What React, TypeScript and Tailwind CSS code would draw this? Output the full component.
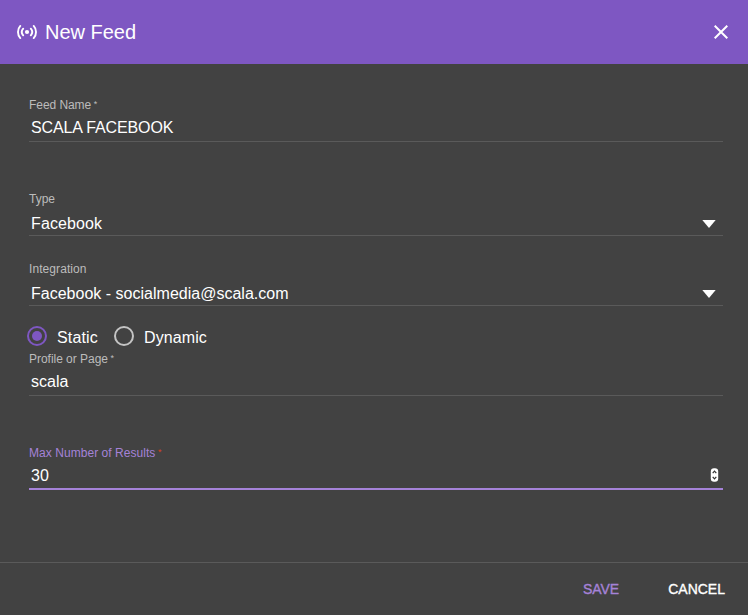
import React from 'react';

type FieldProps = {
  label: string;
  value: string;
  required?: boolean;
  select?: boolean;
  focused?: boolean;
  labelClass?: string;
  valueClass?: string;
  className?: string;
};

function Field({ label, value, required, select, focused, labelClass = '', valueClass = '', className = '' }: FieldProps) {
  return (
    <div className={`${className} ${focused ? 'border-b-2 border-[#a582d8]' : 'border-b border-[#5a5a5a]'}`}>
      <div className={`flex h-4 items-center text-[12px] leading-4 ${focused ? 'text-[#a582d8]' : 'text-[#bcbcbc]'}`}>
        <span className={labelClass}>{label}</span>
        {required && (
          <span className={`ml-[2.5px] h-4 text-[9px] leading-[15px] ${focused ? 'text-[#d8401e]' : ''}`}>*</span>
        )}
      </div>
      <div className={`flex justify-between pl-0.5 text-[16px] text-white ${focused ? 'h-[27px]' : 'h-7'} ${select ? 'items-end pb-[2px]' : 'items-center pt-0.5'}`}>
        <span className={`leading-[18px] ${valueClass}`}>{value}</span>
        {select && (
          <svg className="mr-[7px] mb-[5px]" width="14" height="8" viewBox="0 0 14 8">
            <path d="M0.3 0h13.4L7 8z" fill="#fff" />
          </svg>
        )}
        {focused && (
          <svg className="mr-[4px] mb-px" width="9" height="14" viewBox="0 0 9 14">
            <rect x="0.8" y="0.3" width="7.4" height="13.4" rx="3.2" fill="#fff" />
            <path d="M2.7 5.2 4.5 3.2l1.8 2M2.7 8.8l1.8 2 1.8-2" fill="none" stroke="#333" strokeWidth="1.2" />
          </svg>
        )}
      </div>
    </div>
  );
}

function Radio({ label, checked, labelClass }: { label: string; checked?: boolean; labelClass: string }) {
  return (
    <div className="flex items-center gap-2.5">
      <span className={`flex size-5 items-center justify-center rounded-full border-2 ${checked ? 'border-[#7e57c2]' : 'border-[#c4c4c4]'}`}>
        {checked && <span className="size-2.5 rounded-full bg-[#7e57c2]" />}
      </span>
      <span className={`pt-1 text-[16px] leading-5 text-white ${labelClass}`}>{label}</span>
    </div>
  );
}

export default function App() {
  return (
    <div className="flex h-[615px] w-[748px] flex-col bg-[#424242] font-['Liberation_Sans',Arial,sans-serif]">
      <header className="flex h-16 shrink-0 items-center justify-between bg-[#7e57c2] pr-5 pl-[17px] text-white">
        <div className="flex items-center gap-2">
          <svg width="20" height="16" viewBox="0 0 20 16" fill="none" stroke="#fff" strokeWidth="1.9" strokeLinecap="round">
            <circle cx="10" cy="8" r="2.1" fill="#fff" stroke="none" />
            <path d="M3.3 1.9C.2 5.2.2 10.8 3.3 14.1M16.7 1.9c3.1 3.3 3.1 8.9 0 12.2M6.2 4.7c-1.7 1.9-1.7 4.7 0 6.6M13.8 4.7c1.7 1.9 1.7 4.7 0 6.6" />
          </svg>
          <h2 className="text-[20px] leading-6 tracking-[-0.02px]">New Feed</h2>
        </div>
        <svg width="14" height="14" viewBox="0 0 14 14" fill="none" stroke="#fff" strokeWidth="2">
          <path d="m.7.7 12.6 12.6M13.3.7.7 13.3" />
        </svg>
      </header>

      <main className="flex flex-1 flex-col pt-[33px] pr-[25px] pl-[29px]">
        <Field label="Feed Name" value="SCALA FACEBOOK" valueClass="tracking-[-0.13px]" labelClass="tracking-[-0.06px]" required />
        <Field className="mt-[49px]" label="Type" value="Facebook" valueClass="tracking-[0.12px]" select />
        <Field className="mt-[25px]" label="Integration" value="Facebook - socialmedia@scala.com" labelClass="tracking-[0.08px]" valueClass="tracking-[0.01px]" select />
        <div className="-ml-0.5 flex h-[45px] gap-4 pt-5 [&>div]:h-5">
          <Radio label="Static" checked labelClass="tracking-[0.16px]" />
          <Radio label="Dynamic" labelClass="tracking-[0.1px]" />
        </div>
        <Field label="Profile or Page" value="scala" labelClass="tracking-[-0.03px]" required />
        <Field className="mt-[49px]" label="Max Number of Results" value="30" labelClass="tracking-[0.05px]" required focused />
      </main>

      <footer className="flex h-[53px] shrink-0 items-center justify-end border-t border-[#5a5a5a] pr-[23px] text-[14px] [-webkit-text-stroke:0.35px_currentColor]">
        <button className="text-[#a582d8]">SAVE</button>
        <button className="ml-[49px] text-white">CANCEL</button>
      </footer>
    </div>
  );
}
